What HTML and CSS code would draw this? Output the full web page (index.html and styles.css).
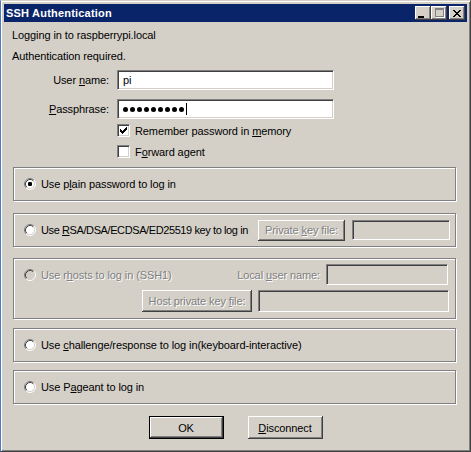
FILE: index.html
```html
<!DOCTYPE html>
<html>
<head>
<meta charset="utf-8">
<link rel="stylesheet" href="styles.css">
</head>
<body>
<div class="window">
  <div class="titlebar">
    <span class="title">SSH Authentication</span>
    <div class="tb-btns">
      <span class="tb-btn"><span class="g-min"></span></span>
      <span class="tb-btn"><span class="g-max"></span></span>
      <span class="tb-btn close"><svg width="8" height="7" viewBox="0 0 8 7"><path d="M0 0h2v1h-2zM6 0h2v1h-2zM1 1h2v1h-2zM5 1h2v1h-2zM2 2h4v1h-4zM3 3h2v1h-2zM2 4h4v1h-4zM1 5h2v1h-2zM5 5h2v1h-2zM0 6h2v1h-2zM6 6h2v1h-2z" fill="#000"/></svg></span>
    </div>
  </div>
  <div class="client">
    <p class="msg">Logging in to raspberrypi.local</p>
    <p class="msg second">Authentication required.</p>

    <div class="row r-user">
      <span class="lbl">User <u>n</u>ame:</span>
      <div class="field"><span class="val">pi</span></div>
    </div>
    <div class="row r-pass">
      <span class="lbl"><u>P</u>assphrase:</span>
      <div class="field pw">
        <span class="dot"></span><span class="dot"></span><span class="dot"></span><span class="dot"></span><span class="dot"></span><span class="dot"></span><span class="dot"></span><span class="dot"></span><span class="dot"></span><span class="caret"></span>
      </div>
    </div>
    <div class="check c1">
      <span class="cb"><svg width="7" height="7" viewBox="0 0 7 7"><path d="M6 0h1v3h-1zM5 1h1v3h-1zM4 2h1v3h-1zM3 3h1v3h-1zM2 4h1v3h-1zM1 3h1v3h-1zM0 2h1v3h-1z" fill="#000"/></svg></span>
      <span>Remember password in <u>m</u>emory</span>
    </div>
    <div class="check c2">
      <span class="cb"></span>
      <span>F<u>o</u>rward agent</span>
    </div>

    <div class="group g1">
      <div class="opt">
        <svg class="radio" width="12" height="12" viewBox="0 0 12 12"><circle cx="6" cy="6" r="5" fill="#fff"/><path d="M2.11 9.89A5.5 5.5 0 0 1 9.89 2.11" stroke="#808080" fill="none"/><path d="M9.89 2.11A5.5 5.5 0 0 1 2.11 9.89" stroke="#fff" fill="none"/><path d="M2.82 9.18A4.5 4.5 0 0 1 9.18 2.82" stroke="#404040" fill="none"/><path d="M9.18 2.82A4.5 4.5 0 0 1 2.82 9.18" stroke="#d4d0c8" fill="none"/><rect x="4" y="4" width="4" height="4" rx="1.2" fill="#000"/></svg>
        <span>Use p<u>l</u>ain password to log in</span>
      </div>
    </div>

    <div class="group g2">
      <div class="opt grow">
        <svg class="radio" width="12" height="12" viewBox="0 0 12 12"><circle cx="6" cy="6" r="5" fill="#fff"/><path d="M2.11 9.89A5.5 5.5 0 0 1 9.89 2.11" stroke="#808080" fill="none"/><path d="M9.89 2.11A5.5 5.5 0 0 1 2.11 9.89" stroke="#fff" fill="none"/><path d="M2.82 9.18A4.5 4.5 0 0 1 9.18 2.82" stroke="#404040" fill="none"/><path d="M9.18 2.82A4.5 4.5 0 0 1 2.82 9.18" stroke="#d4d0c8" fill="none"/></svg>
        <span class="tight">Use <u>R</u>SA/DSA/ECDSA/ED25519 key to log in</span>
      </div>
      <div class="btn dis b-pkf"><span>Private <u>k</u>ey file:</span></div>
      <div class="field off f-pkf"></div>
    </div>

    <div class="group g3">
      <div class="g3-row1">
        <div class="opt grow">
          <svg class="radio" width="12" height="12" viewBox="0 0 12 12"><circle cx="6" cy="6" r="5" fill="#d4d0c8"/><path d="M2.11 9.89A5.5 5.5 0 0 1 9.89 2.11" stroke="#808080" fill="none"/><path d="M9.89 2.11A5.5 5.5 0 0 1 2.11 9.89" stroke="#fff" fill="none"/><path d="M2.82 9.18A4.5 4.5 0 0 1 9.18 2.82" stroke="#404040" fill="none"/><path d="M9.18 2.82A4.5 4.5 0 0 1 2.82 9.18" stroke="#d4d0c8" fill="none"/></svg>
          <span class="dis">Use r<u>h</u>osts to log in (SSH1)</span>
        </div>
        <span class="dis lbl-local">Local <u>u</u>ser name:</span>
        <div class="field off f-local"></div>
      </div>
      <div class="g3-row2">
        <div class="btn dis b-host"><span>Host private key <u>f</u>ile:</span></div>
        <div class="field off f-host"></div>
      </div>
    </div>

    <div class="group g4">
      <div class="opt">
        <svg class="radio" width="12" height="12" viewBox="0 0 12 12"><circle cx="6" cy="6" r="5" fill="#fff"/><path d="M2.11 9.89A5.5 5.5 0 0 1 9.89 2.11" stroke="#808080" fill="none"/><path d="M9.89 2.11A5.5 5.5 0 0 1 2.11 9.89" stroke="#fff" fill="none"/><path d="M2.82 9.18A4.5 4.5 0 0 1 9.18 2.82" stroke="#404040" fill="none"/><path d="M9.18 2.82A4.5 4.5 0 0 1 2.82 9.18" stroke="#d4d0c8" fill="none"/></svg>
        <span>Use <u>c</u>hallenge/response to log in(keyboard-interactive)</span>
      </div>
    </div>

    <div class="group g5">
      <div class="opt">
        <svg class="radio" width="12" height="12" viewBox="0 0 12 12"><circle cx="6" cy="6" r="5" fill="#fff"/><path d="M2.11 9.89A5.5 5.5 0 0 1 9.89 2.11" stroke="#808080" fill="none"/><path d="M9.89 2.11A5.5 5.5 0 0 1 2.11 9.89" stroke="#fff" fill="none"/><path d="M2.82 9.18A4.5 4.5 0 0 1 9.18 2.82" stroke="#404040" fill="none"/><path d="M9.18 2.82A4.5 4.5 0 0 1 2.82 9.18" stroke="#d4d0c8" fill="none"/></svg>
        <span>Use P<u>a</u>geant to log in</span>
      </div>
    </div>

    <div class="buttons">
      <div class="btn default main"><span>OK</span></div>
      <div class="btn main"><span><u>D</u>isconnect</span></div>
    </div>
  </div>
</div>
</body>
</html>
```

FILE: styles.css
```css
* { box-sizing: border-box; }

body {
  margin: 0;
  font-family: "Liberation Sans", Arial, sans-serif;
  font-size: 11px;
  color: #000;
  background: #d4d0c8;
  white-space: nowrap;
}

.window {
  width: 471px;
  height: 452px;
  background: #d4d0c8;
  border: 1px solid;
  border-color: #d4d0c8 #404040 #404040 #4a7ac0;
  box-shadow: inset 1px 1px 0 #fff, inset -1px -1px 0 #808080;
  padding: 3px;
  display: flex;
  flex-direction: column;
}

.titlebar {
  height: 18px;
  background: #0a246a;
  display: flex;
  align-items: center;
  padding: 0 2px;
}

.title {
  flex: 1;
  color: #fff;
  font-weight: bold;
  line-height: 18px;
  letter-spacing: 0.2px;
}

.tb-btns { display: flex; }

.tb-btn {
  width: 16px;
  height: 14px;
  background: #d4d0c8;
  box-shadow: inset -1px -1px 0 #404040, inset 1px 1px 0 #fff, inset -2px -2px 0 #808080;
  display: flex;
  align-items: center;
  justify-content: center;
}

.tb-btn.close { margin-left: 2px; }

.g-min {
  width: 6px;
  height: 2px;
  background: #000;
  margin: 7px 4px 0 0;
}

.g-max {
  width: 9px;
  height: 9px;
  border: 1px solid #808080;
  border-top-width: 2px;
  box-shadow: 1px 1px 0 #fff;
  margin-bottom: 1px;
}

.client {
  flex: 1;
  letter-spacing: -0.1px;
}

.msg {
  margin: 7px 0 0 8px;
  line-height: 13px;
}

.msg.second { margin-top: 8px; }

.row {
  display: flex;
  align-items: center;
  margin-left: 8px;
  height: 20px;
}

.r-user { margin-top: 7px; }
.r-pass { margin-top: 9px; }

.lbl {
  width: 97px;
  margin-right: 8px;
  text-align: right;
}

.field {
  flex-shrink: 0;
  width: 217px;
  height: 20px;
  background: #fff;
  border: 1px solid;
  border-color: #808080 #fff #fff #808080;
  box-shadow: inset 1px 1px 0 #404040, inset -1px -1px 0 #d4d0c8;
  display: flex;
  align-items: center;
  padding-left: 5px;
}

.field.off { background: #d4d0c8; }

.dot {
  width: 5px;
  height: 5px;
  border-radius: 50%;
  background: #000;
  margin-right: 2px;
}

.caret {
  width: 1px;
  height: 12px;
  background: #000;
}

.check {
  display: flex;
  align-items: center;
  height: 13px;
  margin-left: 113px;
}

.check.c1 { margin-top: 5px; }
.check.c2 { margin-top: 8px; }

.cb {
  width: 13px;
  height: 13px;
  background: #fff;
  border: 1px solid;
  border-color: #808080 #fff #fff #808080;
  box-shadow: inset 1px 1px 0 #404040, inset -1px -1px 0 #d4d0c8;
  margin-right: 5px;
  display: flex;
  align-items: center;
  justify-content: center;
}

.group {
  margin-left: 9px;
  width: 443px;
  height: 34px;
  border: 1px solid #808080;
  box-shadow: 1px 1px 0 #fff, inset 1px 1px 0 #fff;
  display: flex;
  align-items: center;
  padding: 0 5px 0 10px;
}

.g1 { margin-top: 9px; }
.g2 { margin-top: 12px; }
.g3 {
  margin-top: 11px;
  height: 61px;
  flex-direction: column;
  align-items: stretch;
  padding: 5px 6px 0 10px;
}
.g4 { margin-top: 9px; }
.g5 { margin-top: 8px; }

.opt {
  display: flex;
  align-items: center;
}

.opt.grow { flex: 1; min-width: 0; }

.tight { letter-spacing: -0.4px; }

.radio {
  display: block;
  flex-shrink: 0;
  margin-right: 5px;
}

.dis {
  color: #808080;
  text-shadow: 1px 1px 0 #fff;
}

.btn {
  flex-shrink: 0;
  background: #d4d0c8;
  box-shadow: inset -1px -1px 0 #404040, inset 1px 1px 0 #fff, inset -2px -2px 0 #808080;
  display: flex;
  align-items: center;
  justify-content: center;
}

.btn.default { border: 1px solid #000; }

.b-pkf { width: 87px; height: 21px; margin-right: 7px; }
.f-pkf { width: 98px; height: 20px; }

.g3-row1 {
  display: flex;
  align-items: center;
  height: 21px;
  margin-right: 1px;
}

.lbl-local { margin-right: 6px; }
.f-local { width: 122px; height: 21px; }

.g3-row2 {
  display: flex;
  justify-content: flex-end;
  gap: 6px;
  height: 22px;
  margin-top: 5px;
}

.b-host { width: 110px; height: 22px; }
.f-host { width: 191px; height: 22px; }

.buttons {
  display: flex;
  justify-content: center;
  gap: 24px;
  margin-top: 12px;
}

.btn.main { width: 75px; height: 23px; }
```
